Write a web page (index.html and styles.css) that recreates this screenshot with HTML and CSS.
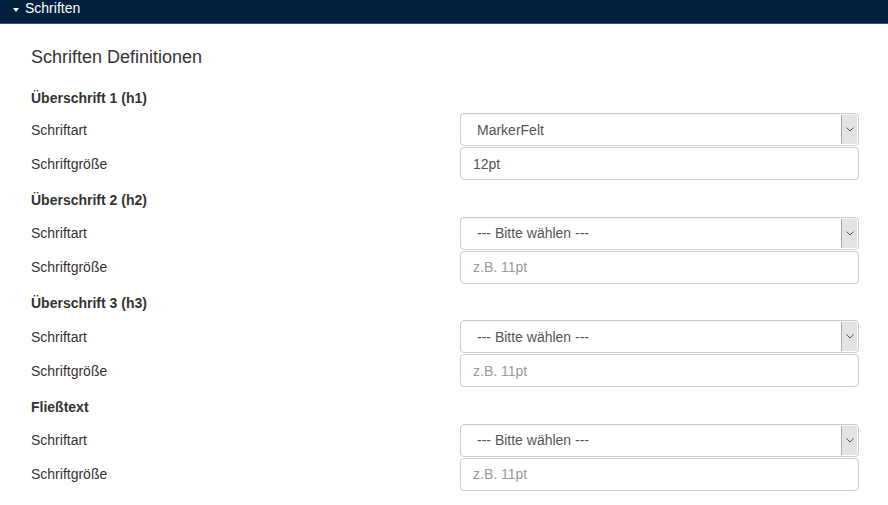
FILE: index.html
```html
<!DOCTYPE html>
<html lang="de">
<head>
<meta charset="utf-8">
<title>Schriften</title>
<link rel="stylesheet" href="styles.css">
</head>
<body>
<div class="bar">
  <span class="caret"></span>
  <span class="bar-title">Schriften</span>
</div>
<main class="panel">
  <h2 class="title">Schriften Definitionen</h2>

  <section class="group">
    <h3 class="group-head">Überschrift 1 (h1)</h3>
    <div class="row">
      <label class="lbl">Schriftart</label>
      <div class="select"><span class="select-val">MarkerFelt</span><span class="select-btn"><svg width="8" height="5" viewBox="0 0 8 5"><path d="M0.5 0.5 L4 4 L7.5 0.5" fill="none" stroke="#555" stroke-width="1"/></svg></span></div>
    </div>
    <div class="row">
      <label class="lbl">Schriftgröße</label>
      <input class="field" type="text" value="12pt">
    </div>
  </section>

  <section class="group">
    <h3 class="group-head">Überschrift 2 (h2)</h3>
    <div class="row">
      <label class="lbl">Schriftart</label>
      <div class="select"><span class="select-val">--- Bitte wählen ---</span><span class="select-btn"><svg width="8" height="5" viewBox="0 0 8 5"><path d="M0.5 0.5 L4 4 L7.5 0.5" fill="none" stroke="#555" stroke-width="1"/></svg></span></div>
    </div>
    <div class="row">
      <label class="lbl">Schriftgröße</label>
      <input class="field" type="text" placeholder="z.B. 11pt">
    </div>
  </section>

  <section class="group">
    <h3 class="group-head">Überschrift 3 (h3)</h3>
    <div class="row">
      <label class="lbl">Schriftart</label>
      <div class="select"><span class="select-val">--- Bitte wählen ---</span><span class="select-btn"><svg width="8" height="5" viewBox="0 0 8 5"><path d="M0.5 0.5 L4 4 L7.5 0.5" fill="none" stroke="#555" stroke-width="1"/></svg></span></div>
    </div>
    <div class="row">
      <label class="lbl">Schriftgröße</label>
      <input class="field" type="text" placeholder="z.B. 11pt">
    </div>
  </section>

  <section class="group">
    <h3 class="group-head">Fließtext</h3>
    <div class="row">
      <label class="lbl">Schriftart</label>
      <div class="select"><span class="select-val">--- Bitte wählen ---</span><span class="select-btn"><svg width="8" height="5" viewBox="0 0 8 5"><path d="M0.5 0.5 L4 4 L7.5 0.5" fill="none" stroke="#555" stroke-width="1"/></svg></span></div>
    </div>
    <div class="row">
      <label class="lbl">Schriftgröße</label>
      <input class="field" type="text" placeholder="z.B. 11pt">
    </div>
  </section>
</main>
</body>
</html>
```
FILE: styles.css
```css
* { box-sizing: border-box; }
html, body {
  margin: 0;
  padding: 0;
  background: #fff;
  font-family: "Liberation Sans", Arial, sans-serif;
  font-size: 14px;
  color: #333;
}
.bar {
  height: 24px;
  background: #011f3d;
  border-bottom: 1px solid #0a52e0;
  display: flex;
  align-items: center;
  padding-left: 13px;
  color: #fff;
}
.caret {
  width: 0;
  height: 0;
  border-left: 3.5px solid transparent;
  border-right: 3.5px solid transparent;
  border-top: 4px solid #fff;
  margin-right: 6px;
  margin-top: -3px;
}
.bar-title {
  font-size: 14px;
  line-height: 16px;
  margin-top: -8px;
}
.panel {
  padding: 22px 29px 0 31px;
}
.title {
  margin: 0;
  font-size: 18px;
  font-weight: normal;
  line-height: 22px;
  color: #333;
}
.group-head {
  margin: 0;
  font-size: 14px;
  font-weight: bold;
  line-height: 20px;
  padding: 8.5px 0 7.17px;
}
.group:first-of-type .group-head {
  padding-top: 20px;
  padding-bottom: 5px;
}
.row {
  display: grid;
  grid-template-columns: 1fr 399px;
  align-items: center;
  margin-bottom: 1px;
}
.lbl {
  font-size: 14px;
  color: #333;
}
.select {
  height: 33px;
  border: 1px solid #ccc;
  border-radius: 4px;
  display: flex;
  align-items: stretch;
  padding: 1px 1px 1px 16px;
  box-shadow: inset 0 1px 1px rgba(0,0,0,0.04);
}
.select-val {
  flex: 1;
  display: flex;
  align-items: center;
  color: #555;
  font-size: 14px;
}
.select-btn {
  width: 16px;
  background: #e3e3e3;
  border-left: 1px solid #a9a9a9;
  border-radius: 0 2px 2px 0;
  display: flex;
  align-items: center;
  justify-content: center;
}
.field {
  height: 33px;
  width: 100%;
  border: 1px solid #ccc;
  border-radius: 4px;
  padding: 0 12px;
  font-family: "Liberation Sans", Arial, sans-serif;
  font-size: 14px;
  color: #555;
  background: #fff;
  outline: none;
}
.field::placeholder {
  color: #999;
}
```
